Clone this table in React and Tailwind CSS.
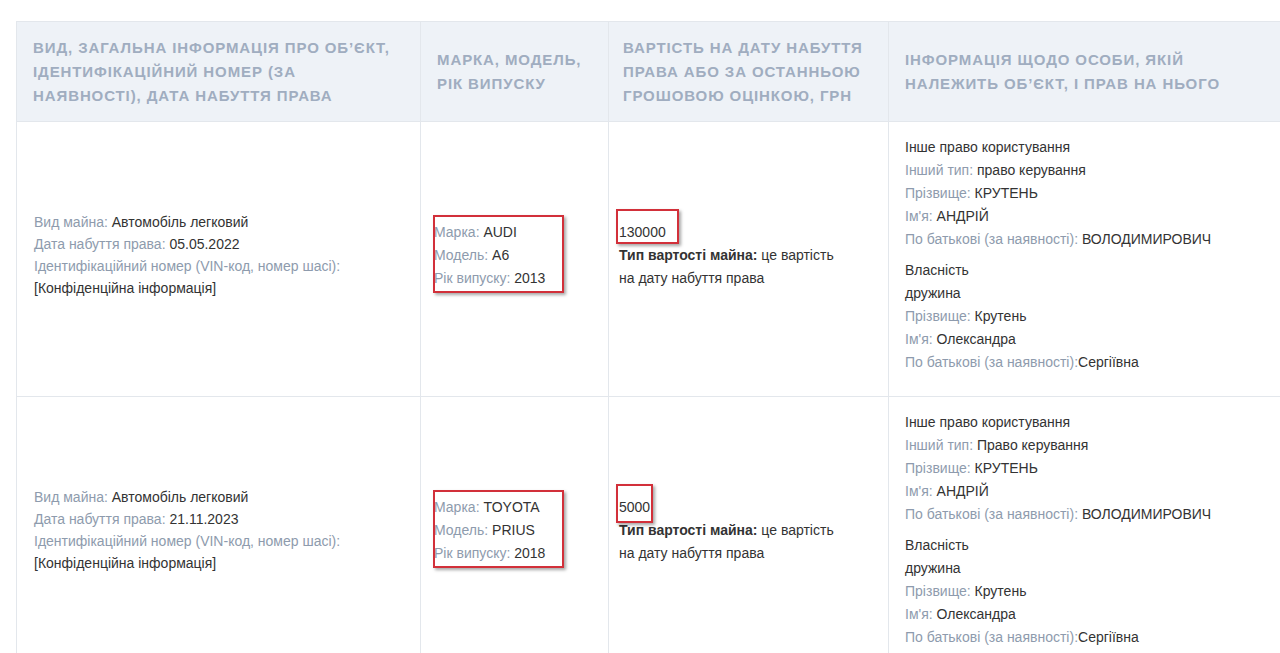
const HEAD = [
  'Вид, загальна інформація про об’єкт, ідентифікаційний номер (за наявності), дата набуття права',
  'Марка, модель, рік випуску',
  'Вартість на дату набуття права або за останньою грошовою оцінкою, грн',
  'Інформація щодо особи, якій належить об’єкт, і прав на нього',
]

const ROWS = [
  {
    date: '05.05.2022',
    brand: 'AUDI',
    model: 'A6',
    year: '2013',
    price: '130000',
    priceBox: '-top-[12px] bottom-0 -left-[3px] -right-[13px]',
    kind: 'право керування',
  },
  {
    date: '21.11.2023',
    brand: 'TOYOTA',
    model: 'PRIUS',
    year: '2018',
    price: '5000',
    priceBox: '-top-[12px] -bottom-[4px] -left-[3px] -right-[3px]',
    kind: 'Право керування',
  },
]

function Line({ label, value, tight }) {
  return (
    <div>
      <span className="text-[#8e9bad]">{label}:</span>
      {tight ? '' : ' '}
      <span className="text-[#333]">{value}</span>
    </div>
  )
}

function RedBox({ className }) {
  return (
    <span
      className={`absolute border-2 border-[#d2303a] shadow-[2px_2px_3px_rgba(0,0,0,0.35)] pointer-events-none ${className}`}
    />
  )
}

export default function App() {
  return (
    <div className="w-[1280px] h-[653px] overflow-hidden bg-white pt-[21px] pl-4 font-['Liberation_Sans',Arial,sans-serif]">
      <table className="table-fixed w-[1290px] border-collapse border border-[#e3e7ec]">
        <colgroup>
          <col className="w-[404px]" />
          <col className="w-[188px]" />
          <col className="w-[280px]" />
          <col />
        </colgroup>
        <thead>
          <tr className="bg-[#eef2f7] h-[100px]">
            {HEAD.map((h, i) => (
              <th
                key={i}
                className={`border border-[#e3e7ec] align-middle text-left uppercase font-bold text-[15px] leading-[24px] tracking-[0.9px] text-[#a0adc0] ${i === 2 ? 'pl-[14px] pr-3' : i === 3 ? 'pl-4 pr-12' : 'px-4'}`}
              >
                {h}
              </th>
            ))}
          </tr>
        </thead>
        <tbody className="text-[14px] leading-[23px]">
          {ROWS.map((r, i) => (
            <tr key={i}>
              <td className="border border-[#e3e7ec] align-middle pl-[17px] pr-3 pt-[14px] pb-[22px] leading-[22px]">
                <Line label="Вид майна" value="Автомобіль легковий" />
                <Line label="Дата набуття права" value={r.date} />
                <div className="text-[#8e9bad]">Ідентифікаційний номер (VIN-код, номер шасі):</div>
                <div className="text-[#333]">[Конфіденційна інформація]</div>
              </td>
              <td className="border border-[#e3e7ec] align-middle pl-[13px] pr-2 pt-[14px] pb-[22px]">
                <div className="relative">
                  <RedBox className="-top-[6px] -bottom-[3px] -left-[1px] w-[131px]" />
                  <Line label="Марка" value={r.brand} />
                  <Line label="Модель" value={r.model} />
                  <Line label="Рік випуску" value={r.year} />
                </div>
              </td>
              <td className="border border-[#e3e7ec] align-middle pl-[10px] pr-3 pt-[14px] pb-[22px] text-[#333]">
                <div>
                  <span className="relative inline-block">
                    <RedBox className={r.priceBox} />
                    {r.price}
                  </span>
                </div>
                <div>
                  <span className="font-bold">Тип вартості майна:</span> це вартість
                  <br />
                  на дату набуття права
                </div>
              </td>
              <td className="border border-[#e3e7ec] align-middle pl-4 pr-3 pt-[14px] pb-[22px] text-[#333]">
                <div>Інше право користування</div>
                <Line label="Інший тип" value={r.kind} />
                <Line label="Прізвище" value="КРУТЕНЬ" />
                <Line label="Ім'я" value="АНДРІЙ" />
                <Line label="По батькові (за наявності)" value="ВОЛОДИМИРОВИЧ" />
                <div className="mt-2">Власність</div>
                <div>дружина</div>
                <Line label="Прізвище" value="Крутень" />
                <Line label="Ім'я" value="Олександра" />
                <Line label="По батькові (за наявності)" value="Сергіївна" tight />
              </td>
            </tr>
          ))}
        </tbody>
      </table>
    </div>
  )
}
